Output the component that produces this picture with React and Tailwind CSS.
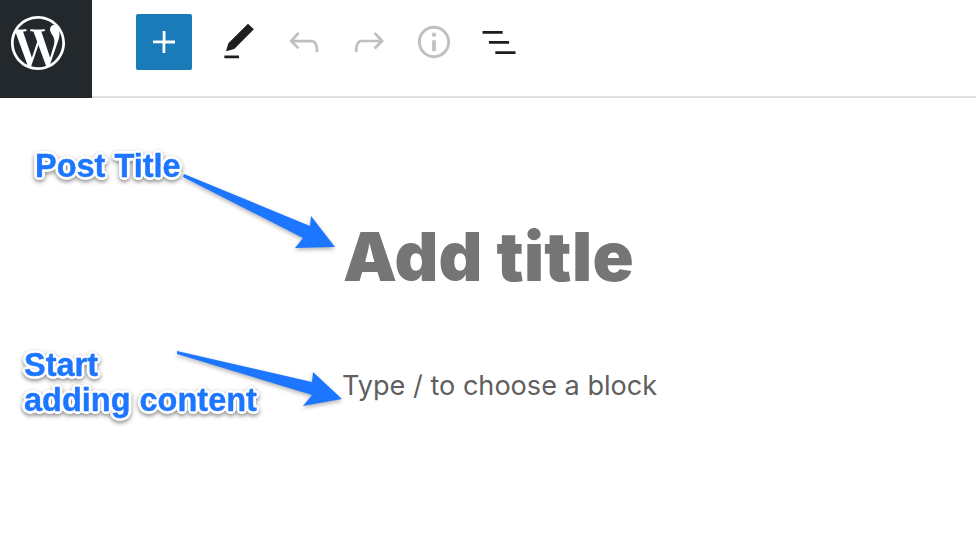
import { SiWordpress } from 'react-icons/si'

const toolbarIcons = [
    { name: 'tools', color: 'text-[#1e1e1e]', path: 'M20.1 5.1L16.9 2 6.2 12.7l-1.3 4.4 4.5-1.3L20.1 5.1zM4 20.8h8v-1.5H4v1.5z' },
    { name: 'undo', color: 'text-[#c0c0c0]', path: 'M18.3 11.7c-.6-.6-1.4-.9-2.3-.9H6.7l2.9-3.3-1.1-1-4.5 5L8.5 16l1-1-2.7-2.7H16c.5 0 .9.2 1.3.5 1 1 1 3.4 1 4.5v.3h1.5v-.2c0-1.5 0-4.3-1.5-5.7z' },
    { name: 'redo', color: 'text-[#c0c0c0]', path: 'M15.6 6.5l-1.1 1 2.9 3.3H8c-.9 0-1.7.3-2.3.9-1.4 1.5-1.4 4.2-1.4 5.6v.2h1.5v-.3c0-1.1 0-3.5 1-4.5.3-.3.7-.5 1.3-.5h9.2L14.5 15l1.1 1.1 4.6-4.6-4.6-5z' },
    { name: 'info', color: 'text-[#c0c0c0]', path: 'M12 3.2c-4.8 0-8.8 3.9-8.8 8.8 0 4.8 3.9 8.8 8.8 8.8 4.8 0 8.8-3.9 8.8-8.8 0-4.8-4-8.8-8.8-8.8zm0 16c-4 0-7.2-3.3-7.2-7.2C4.8 8 8 4.8 12 4.8s7.2 3.3 7.2 7.2c0 4-3.2 7.2-7.2 7.2zM11 17h2v-6h-2v6zm0-8h2V7h-2v2z' },
    { name: 'list', color: 'text-[#1e1e1e]', path: 'M3 6h11v1.5H3V6zm3.5 5.5h11V13h-11v-1.5zM21 17H10v1.5h11V17z' },
]

function Icon({ path, className }) {
    return (
        <svg viewBox="0 0 24 24" fill="currentColor" className={className} aria-hidden="true">
            <path d={path} />
        </svg>
    )
}

function Label({ className, children }) {
    return (
        <div className={`absolute font-['Liberation_Sans',Arial,sans-serif] font-bold text-[32.5px] leading-[35px] text-[#1d76ff] [-webkit-text-stroke:0.4px_#1d76ff] [text-shadow:3px_0_0_white,-3px_0_0_white,0_3px_0_white,0_-3px_0_white,2px_2px_0_white,-2px_2px_0_white,2px_-2px_0_white,-2px_-2px_0_white] drop-shadow-[0_2px_2px_rgba(0,0,0,0.45)] ${className}`}>
            {children}
        </div>
    )
}

export default function App() {
    return (
        <div className="relative h-[544px] w-[976px] overflow-hidden bg-white font-['Inter',sans-serif]">
            <header className="flex h-[98px] border-b-2 border-[#e0e0e0]">
                <div className="flex h-[98px] w-[92px] shrink-0 items-center justify-center bg-[#23282d] pb-[12px] pr-[16px]">
                    <SiWordpress className="h-[54px] w-[54px] text-white" />
                </div>
                <div className="flex items-center gap-[21px] pb-[12px] pl-[44px]">
                    <button className="mr-[4px] flex h-[56px] w-[56px] items-center justify-center rounded-[2px] bg-[#1a7bb9] text-white">
                        <Icon path="M18 11.2h-5.2V6h-1.5v5.2H6v1.5h5.2V18h1.5v-5.2H18z" className="h-[44px] w-[44px]" />
                    </button>
                    {toolbarIcons.map((icon) => (
                        <Icon key={icon.name} path={icon.path} className={`h-[44px] w-[44px] ${icon.color}`} />
                    ))}
                </div>
            </header>

            <main className="pl-[342px]">
                <h1 className="ml-[1px] mt-[116px] text-[68px] font-black leading-[84px] tracking-[0.25px] text-[#757575]">Add title</h1>
                <p className="mt-[68px] text-[27.1px] leading-[40px] text-[#5f5f5f]">Type / to choose a block</p>
            </main>

            <Label className="left-[35px] top-[149px]">Post Title</Label>
            <Label className="left-[24px] top-[348px]">Start<br />adding content</Label>

            {/* annotation arrows */}
            <svg viewBox="0 0 976 544" className="absolute inset-0 h-[544px] w-[976px] drop-shadow-[0_2px_2px_rgba(0,0,0,0.3)]" aria-hidden="true">
                <polygon fill="#1d76ff" points="184,174 310,226 311,216 335,247 295,248 303,238 183,177" />
                <polygon fill="#1d76ff" points="177,351 312,382 313,372 342,399 303,406 312,395 177,354" />
            </svg>
        </div>
    )
}
